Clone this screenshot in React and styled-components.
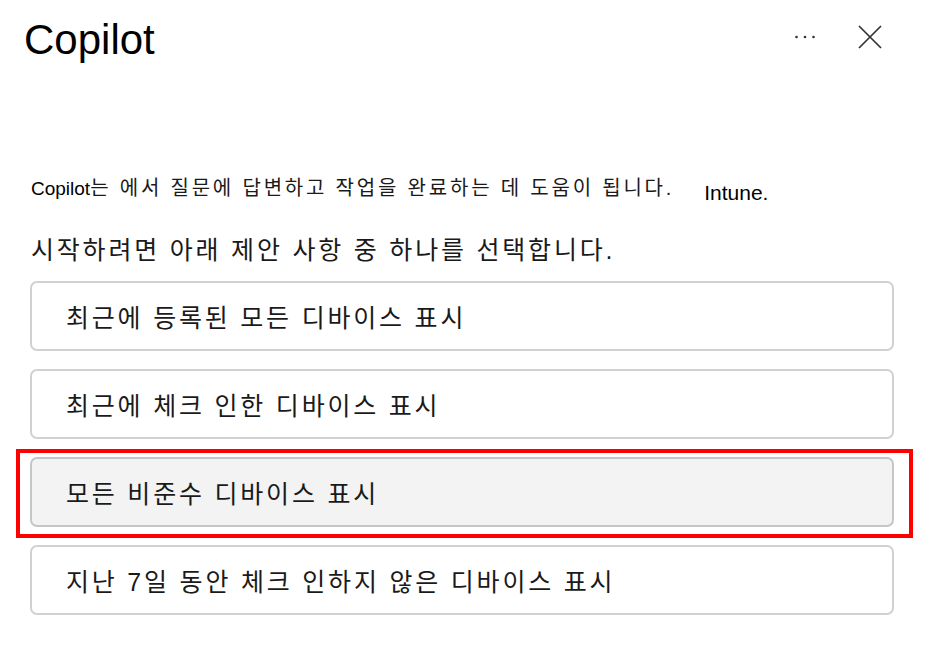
import React from "react";
import styled, { createGlobalStyle } from "styled-components";

const GlobalStyle = createGlobalStyle`
  html, body {
    margin: 0;
    padding: 0;
    background: #fff;
  }
  body {
    font-family: "Liberation Sans", "Noto Sans CJK KR", Arial, sans-serif;
    color: #1a1a1a;
  }
`;

const Panel = styled.div`
  width: 926px;
  height: 656px;
  overflow: hidden;
  background: #fff;
`;

const Header = styled.header`
  display: flex;
  align-items: flex-start;
  justify-content: space-between;
  padding: 16px 44px 0 24px;
`;

const Title = styled.h1`
  margin: 0;
  font-size: 42px;
  line-height: 48px;
  font-weight: 400;
  color: #000;
`;

const Actions = styled.div`
  display: flex;
  align-items: center;
  gap: 43px;
  padding-top: 9px;
`;

const IconButton = styled.button`
  display: flex;
  align-items: center;
  justify-content: center;
  padding: 0;
  border: none;
  background: transparent;
  color: #333;
  cursor: pointer;
`;

const Body = styled.main`
  padding: 0 32px 0 30px;
`;

const Intro = styled.p`
  margin: 110px 0 0 1px;
  font-size: 19px;
  line-height: 28px;
  white-space: nowrap;
  color: #000;
`;

const Korean = styled.span`
  font-size: 20px;
  letter-spacing: 2.8px;
  color: #1a1a1a;
`;

const Product = styled.span`
  margin-left: 30px;
  font-size: 21px;
  vertical-align: -5px;
  color: #000;
`;

const Prompt = styled.p`
  margin: 27px 0 0 1px;
  font-size: 25px;
  line-height: 32px;
  letter-spacing: 2.8px;
  white-space: nowrap;
`;

const Suggestions = styled.ul`
  list-style: none;
  margin: 15px 0 0;
  padding: 0;
  display: flex;
  flex-direction: column;
  gap: 18px;
`;

const Item = styled.li`
  position: relative;
`;

const Suggestion = styled.button`
  display: flex;
  align-items: center;
  width: 864px;
  height: 70px;
  box-sizing: border-box;
  padding: 0 0 0 34px;
  border: 2px solid ${(p) => (p.$active ? "#c6c6c6" : "#d1d1d1")};
  border-radius: 7px;
  background: ${(p) => (p.$active ? "#f3f3f3" : "#fff")};
  font-family: inherit;
  font-size: 25px;
  letter-spacing: 2.8px;
  color: #1a1a1a;
  text-align: left;
  cursor: pointer;
`;

const Highlight = styled.span`
  position: absolute;
  top: -8px;
  bottom: -11px;
  left: -14px;
  right: -19px;
  border: 4px solid #ff0000;
  pointer-events: none;
`;

const suggestions = [
  "최근에 등록된 모든 디바이스 표시",
  "최근에 체크 인한 디바이스 표시",
  "모든 비준수 디바이스 표시",
  "지난 7일 동안 체크 인하지 않은 디바이스 표시",
];

const MoreIcon = () => (
  <svg width="20" height="6" viewBox="0 0 20 6">
    <circle cx="1.5" cy="3" r="1.3" fill="currentColor" />
    <circle cx="10" cy="3" r="1.3" fill="currentColor" />
    <circle cx="18.5" cy="3" r="1.3" fill="currentColor" />
  </svg>
);

const CloseIcon = () => (
  <svg width="24" height="24" viewBox="0 0 24 24">
    <path
      d="M1 1 L23 23 M23 1 L1 23"
      stroke="currentColor"
      strokeWidth="1.7"
      fill="none"
    />
  </svg>
);

export default function App() {
  return (
    <Panel>
      <GlobalStyle />
      <Header>
        <Title>Copilot</Title>
        <Actions>
          <IconButton aria-label="더 보기">
            <MoreIcon />
          </IconButton>
          <IconButton aria-label="닫기">
            <CloseIcon />
          </IconButton>
        </Actions>
      </Header>
      <Body>
        <Intro>
          Copilot
          <Korean>는 에서 질문에 답변하고 작업을 완료하는 데 도움이 됩니다.</Korean>
          <Product>Intune.</Product>
        </Intro>
        <Prompt>시작하려면 아래 제안 사항 중 하나를 선택합니다.</Prompt>
        <Suggestions>
          {suggestions.map((text, i) => (
            <Item key={text}>
              <Suggestion $active={i === 2}>{text}</Suggestion>
              {i === 2 && <Highlight />}
            </Item>
          ))}
        </Suggestions>
      </Body>
    </Panel>
  );
}
